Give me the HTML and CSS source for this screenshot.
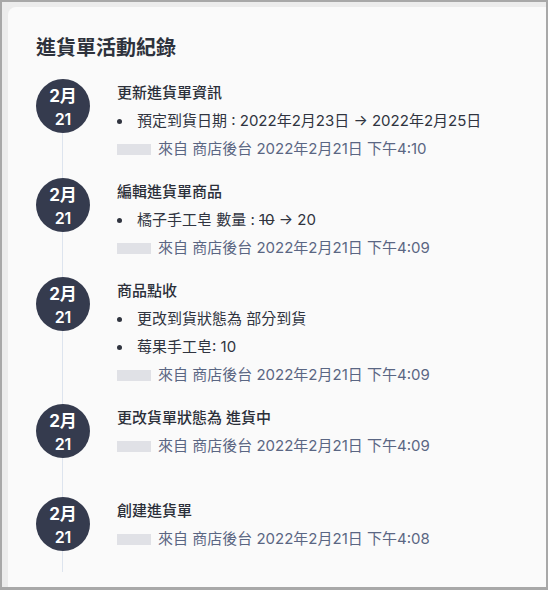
FILE: index.html
```html
<!DOCTYPE html>
<html lang="zh-Hant">
<head>
<meta charset="utf-8">
<link rel="stylesheet" href="styles.css">
</head>
<body>
<div class="frame">
  <section class="card">
    <h2 class="title">進貨單活動紀錄</h2>
    <div class="timeline">
      <div class="item">
        <div class="date"><span class="m">2月</span><span class="d">21</span></div>
        <div class="content">
          <div class="ev">更新進貨單資訊</div>
          <ul class="bullets">
            <li>預定到貨日期 : 2022年2月23日 → 2022年2月25日</li>
          </ul>
          <div class="meta"><span class="blur"></span>來自 商店後台 2022年2月21日 下午4:10</div>
        </div>
      </div>
      <div class="item">
        <div class="date"><span class="m">2月</span><span class="d">21</span></div>
        <div class="content">
          <div class="ev">編輯進貨單商品</div>
          <ul class="bullets">
            <li>橘子手工皂 數量 :&nbsp;<s>10</s>&nbsp;→ 20</li>
          </ul>
          <div class="meta"><span class="blur"></span>來自 商店後台 2022年2月21日 下午4:09</div>
        </div>
      </div>
      <div class="item">
        <div class="date"><span class="m">2月</span><span class="d">21</span></div>
        <div class="content">
          <div class="ev">商品點收</div>
          <ul class="bullets">
            <li>更改到貨狀態為 部分到貨</li>
            <li>莓果手工皂: 10</li>
          </ul>
          <div class="meta"><span class="blur"></span>來自 商店後台 2022年2月21日 下午4:09</div>
        </div>
      </div>
      <div class="item">
        <div class="date"><span class="m">2月</span><span class="d">21</span></div>
        <div class="content">
          <div class="ev">更改貨單狀態為 進貨中</div>
          <div class="meta"><span class="blur"></span>來自 商店後台 2022年2月21日 下午4:09</div>
        </div>
      </div>
      <div class="item">
        <div class="date"><span class="m">2月</span><span class="d">21</span></div>
        <div class="content">
          <div class="ev">創建進貨單</div>
          <div class="meta"><span class="blur"></span>來自 商店後台 2022年2月21日 下午4:08</div>
        </div>
      </div>
    </div>
  </section>
</div>
</body>
</html>
```

FILE: styles.css
```css
* { box-sizing: border-box; }
html, body { margin: 0; padding: 0; }
body {
  width: 548px;
  height: 590px;
  overflow: hidden;
  font-family: "Inter", "Noto Sans CJK TC", sans-serif;
  color: #30343f;
}
.frame {
  width: 548px;
  height: 590px;
  border: 2px solid #a8a8a8;
  border-bottom-width: 3px;
  background: #ececec;
  padding: 5px 0 0 6px;
  display: flex;
}
.card {
  flex: 1;
  background: #fafafa;
  border-top-left-radius: 8px;
  padding: 27px 0 0 28px;
}
.title {
  margin: 0 0 17px;
  font-size: 20px;
  line-height: 28px;
  font-weight: 700;
  color: #2e323c;
}
.timeline { position: relative; }
.timeline::before {
  content: "";
  position: absolute;
  left: 26px;
  top: 27px;
  bottom: 0;
  width: 1px;
  background: #dde4ee;
}
.item {
  position: relative;
  display: flex;
  min-height: 93px;
}
.item:last-child { min-height: 75px; }
.date {
  flex: none;
  width: 54px;
  height: 54px;
  border-radius: 50%;
  background: #353b4e;
  color: #fff;
  display: flex;
  flex-direction: column;
  align-items: center;
  justify-content: center;
  padding-top: 3px;
  margin-right: 27px;
}
.date .m { font-size: 17px; font-weight: 700; line-height: 23px; }
.date .d { font-size: 16px; font-weight: 600; line-height: 23px; }
.content { padding-bottom: 15px; font-size: 15px; line-height: 28px; }
.ev { font-weight: 500; color: #2b2f39; }
.bullets { margin: 0; padding: 0; list-style: none; }
.bullets li { display: flex; align-items: center; color: #30343f; white-space: pre; }
.bullets li::before {
  content: "";
  width: 5px;
  height: 5px;
  border-radius: 50%;
  background: #30343f;
  margin: 0 15px 0 0;
  flex: none;
}
.bullets s { text-decoration-thickness: 1px; }
.meta { display: flex; align-items: center; color: #5a6683; white-space: pre; }
.blur {
  width: 34px;
  height: 11px;
  background: #e0e1e6;
  margin-right: 7px;
}
```
